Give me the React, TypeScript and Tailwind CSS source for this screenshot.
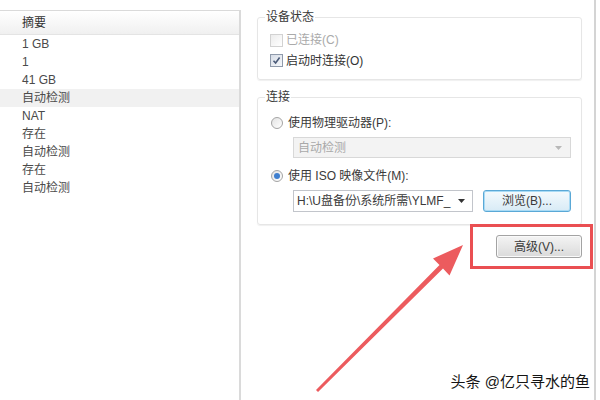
import React from "react";

const summary = ["1 GB", "1", "41 GB", "自动检测", "NAT", "存在", "自动检测", "存在", "自动检测"];

function Checkbox({ checked, disabled }: { checked?: boolean; disabled?: boolean }) {
  return (
    <span
      className={
        "flex h-[13px] w-[13px] items-center justify-center border bg-gradient-to-br " +
        (disabled ? "border-[#d2d2d2] from-[#ececec] to-white" : "border-[#8f9aab] from-[#d6dce6] to-[#f6f8fb]")
      }
    >
      {checked && (
        <svg width="9" height="9" viewBox="0 0 9 9">
          <path d="M1.5 4.8 L3.6 7 L7.6 1.6" fill="none" stroke="#4a5a78" strokeWidth="1.6" />
        </svg>
      )}
    </span>
  );
}

function Radio({ checked }: { checked?: boolean }) {
  return (
    <span className="flex h-[12px] w-[12px] items-center justify-center rounded-full border border-[#a4a4a4] bg-gradient-to-br from-[#e3e3e3] to-white">
      {checked && <span className="h-[6px] w-[6px] rounded-full bg-[#3f7fcf]" />}
    </span>
  );
}

function Caret({ color }: { color: string }) {
  return (
    <svg width="7" height="4" viewBox="0 0 7 4">
      <path d="M0 0 H7 L3.5 4 Z" fill={color} />
    </svg>
  );
}

export default function App() {
  return (
    <div className="relative flex h-[400px] w-[600px] overflow-hidden bg-white font-['Liberation_Sans','Noto_Sans_CJK_SC',sans-serif] text-[12px] leading-[14px] text-[#444]">
      {/* 左侧摘要列表 */}
      <div className="mt-[10px] w-[241px] border-t border-r-2 border-[#dadada]">
        <div className="flex h-[24px] items-center border-b border-[#e4e4e4] bg-gradient-to-b from-white to-[#f0f0f0] pl-[22px] text-[#333]">
          摘要
        </div>
        {summary.map((s, i) => (
          <div
            key={i}
            className={"flex h-[18px] items-center pl-[22px] text-[#4a4a4a] " + (i === 3 ? "bg-[#f1f1f1]" : "")}
          >
            {s}
          </div>
        ))}
      </div>

      {/* 右侧设置 */}
      <div className="w-[355px] border-r-2 border-[#d4d4d4] pt-[10px] pl-[16px] pr-[12px]">
        <fieldset className="rounded-[3px] border border-[#e6e6e6] px-[7px] pb-[8px] shadow-[0_1px_1px_#f0f0f0]">
          <legend className="px-[1px] text-[#3a3a3a]">设备状态</legend>
          <div className="pt-[6px]">
            <label className="flex h-[20px] items-center gap-[3px] pl-[5px] text-[#aaaaaa]">
              <Checkbox disabled />
              已连接(C)
            </label>
            <label className="flex h-[21px] items-center gap-[3px] pl-[5px] text-[#333]">
              <Checkbox checked />
              启动时连接(O)
            </label>
          </div>
        </fieldset>

        <fieldset className="mt-[10px] rounded-[3px] border border-[#e6e6e6] px-[7px] pb-[12px] shadow-[0_1px_1px_#f0f0f0]">
          <legend className="px-[1px] text-[#3a3a3a]">连接</legend>
          <div className="pt-[9px]">
            <label className="flex h-[20px] items-center gap-[5px] pl-[6px] text-[#3a3a3a]">
              <Radio />
              使用物理驱动器(P):
            </label>
            <div className="mt-[4px] ml-[28px] flex h-[21px] w-[278px] items-center justify-between border border-[#d8d8d8] bg-[#f3f3f3] pr-[8px] pl-[4px] text-[#a9a9a9]">
              自动检测
              <Caret color="#b8b8b8" />
            </div>
            <label className="mt-[8px] flex h-[20px] items-center gap-[5px] pl-[6px] text-[#3a3a3a]">
              <Radio checked />
              使用 ISO 映像文件(M):
            </label>
            <div className="mt-[4px] ml-[28px] flex items-center gap-[10px]">
              <div className="flex h-[22px] w-[180px] items-center justify-between border border-[#c2c5cb] bg-white pr-[7px] pl-[3px] text-[#3a3a3a]">
                <span className="whitespace-nowrap">H:\U盘备份\系统所需\YLMF_</span>
                <Caret color="#333" />
              </div>
              <button className="flex h-[22px] w-[88px] items-center justify-center rounded-[3px] border border-[#5aa8d6] bg-gradient-to-b from-[#f4fafd] to-[#d8ebf6] text-[#3a3a3a] shadow-[inset_0_0_0_1px_#a9dbf5]">
                浏览(B)...
              </button>
            </div>
          </div>
        </fieldset>

        <div className="mt-[10px] flex justify-end">
          <button className="flex h-[23px] w-[86px] items-center justify-center rounded-[3px] border border-[#a3a3a3] bg-gradient-to-b from-[#f4f4f4] to-[#dadada] text-[#3a3a3a] shadow-[inset_0_0_0_1px_#fafafa]">
            高级(V)...
          </button>
        </div>
      </div>

      {/* 标注：红框与箭头 */}
      <div className="absolute top-[224px] left-[470px] h-[45px] w-[123px] border-[3px] border-[#ea4f52]" />
      <svg className="absolute top-0 left-0" width="600" height="400" viewBox="0 0 600 400">
        <polygon
          points="318,392 443,268.5 449.5,275.5 463,245 433,258.5 439.5,265 316,390"
          fill="#ec5b5e"
        />
      </svg>

      <div className="absolute right-[10px] bottom-[9px] text-[15px] leading-[18px] text-[#151515] [text-shadow:0_0_2px_#fff,0_0_2px_#fff]">
        头条 @亿只寻水的鱼
      </div>
    </div>
  );
}
